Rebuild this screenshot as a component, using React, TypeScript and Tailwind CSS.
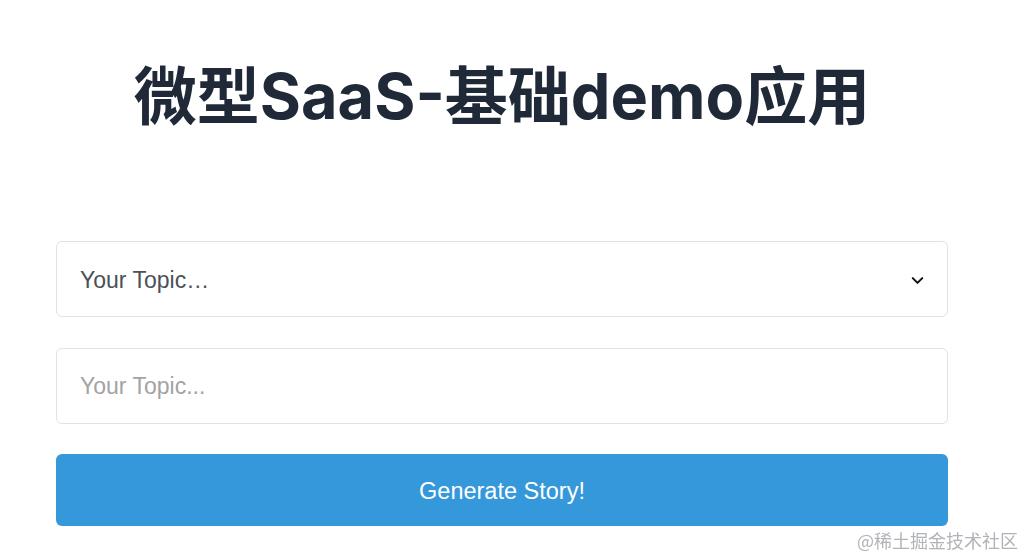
import { ChevronDown } from "lucide-react";

export default function App() {
  return (
    <div className="min-h-[557px] w-[1024px] bg-white font-['Liberation_Sans',Arial,sans-serif]">
      <div className="pl-[56px] pr-[76px]">
        {/* Title */}
        <h1 className="pt-[52px] text-center font-['Inter','Noto_Sans_CJK_SC',sans-serif] text-[63px] leading-[88px] font-bold text-[#1f2937]">
          微型SaaS-基础demo应用
        </h1>

        <div className="mt-[101px] flex flex-col gap-[31px]">
          {/* Select */}
          <div className="relative h-[76px] rounded-[6px] border border-[#e2e2e2] bg-white">
            <div className="flex h-full items-center pl-[23px] pt-[2px] text-[23px] text-[#4b5157]">
              Your Topic…
            </div>
            <ChevronDown
              size={19}
              strokeWidth={2.6}
              className="absolute right-[20px] top-[29px] text-[#111]"
            />
          </div>

          {/* Input */}
          <input
            placeholder="Your Topic..."
            className="h-[76px] w-full rounded-[6px] border border-[#e2e2e2] px-[23px] text-[23px] text-[#333] placeholder:text-[#a3a3a3] outline-none"
          />

          {/* Button */}
          <button className="-mt-[1px] h-[72px] w-full rounded-[6px] bg-[#3498db] pt-[3px] text-[23.5px] text-white">
            Generate Story!
          </button>
        </div>
      </div>

      <div className="fixed bottom-[6px] right-[6px] font-['Noto_Sans_CJK_SC',sans-serif] text-[18px] leading-[22px] text-[#b0b3b8]">
        @稀土掘金技术社区
      </div>
    </div>
  );
}
